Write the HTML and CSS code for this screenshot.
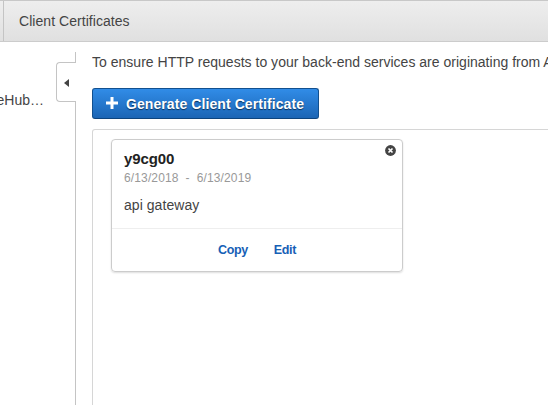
FILE: index.html
```html
<!DOCTYPE html>
<html lang="en">
<head>
<meta charset="utf-8">
<title>Client Certificates</title>
<link rel="stylesheet" href="styles.css">
</head>
<body>
<header class="topbar"><h1 class="crumb">Client Certificates</h1></header>
<div class="layout">
  <aside class="sidebar">
    <div class="api-name">eHub…</div>
    <div class="rail">
      <div class="rail-line rail-start"></div>
      <button class="collapse" aria-label="Collapse"><svg width="5" height="8" viewBox="0 0 5 8"><path d="M5 0v8L0 4z" fill="#444"/></svg></button>
      <div class="rail-line rail-rest"></div>
    </div>
  </aside>
  <main class="content">
    <p class="intro">To ensure HTTP requests to your back-end services are originating from A</p>
    <button class="generate"><svg width="12" height="12" viewBox="0 0 12 12"><path d="M6 0v12M0 6h12" stroke="#fff" stroke-width="3"/></svg><span class="generate-text">Generate Client Certificate</span></button>
    <section class="panel">
      <article class="card">
        <div class="card-body">
          <button class="close" aria-label="Delete"><svg width="11" height="11" viewBox="0 0 11 11"><circle cx="5.5" cy="5.5" r="5.4" fill="#444"/><path d="M3.5 3.5l4 4M7.5 3.5l-4 4" stroke="#fff" stroke-width="1.7"/></svg></button>
          <h2 class="cert-id">y9cg00</h2>
          <div class="dates"><span>6/13/2018</span><span>-</span><span>6/13/2019</span></div>
          <p class="description">api gateway</p>
        </div>
        <footer class="actions"><a class="copy">Copy</a><a class="edit">Edit</a></footer>
      </article>
    </section>
  </main>
</div>
</body>
</html>
```
FILE: styles.css
```css
* { box-sizing: border-box; }
body {
  margin: 0;
  height: 405px;
  overflow: hidden;
  background: #fff;
  color: #444;
  font: 14px/18px "Liberation Sans", Arial, sans-serif;
}
h1, h2, p { margin: 0; font: inherit; }
button { padding: 0; border: 0; background: none; font: inherit; }
svg { display: block; flex: none; }
.topbar {
  height: 42px;
  padding-left: 3px;
  border-top: 1px solid #c8c8c8;
  border-bottom: 1px solid #ccc;
  background: linear-gradient(#eee, #e0e0e0);
}
.crumb {
  height: 40px;
  padding: 11px 0 0 15px;
  border-left: 1px solid #c4c4c4;
  letter-spacing: 0.05px;
}
.layout { display: flex; height: 363px; }
.sidebar { display: flex; width: 76px; flex: none; }
.api-name {
  display: flex;
  justify-content: flex-end;
  width: 44px;
  margin-right: 12px;
  padding-top: 49px;
  overflow: hidden;
  white-space: nowrap;
}
.rail {
  display: flex;
  flex-direction: column;
  width: 20px;
  padding-top: 10px;
}
.rail-line { border-right: 1px solid #c4c4c4; }
.rail-start { height: 10px; }
.rail-rest { flex: 1; }
.collapse {
  display: flex;
  align-items: center;
  width: 20px;
  height: 40px;
  padding: 2px 0 0 7px;
  border: 1px solid #c4c4c4;
  border-right: 0;
  border-radius: 4px 0 0 4px;
}
.content {
  display: flex;
  flex: 1;
  flex-direction: column;
  align-items: flex-start;
  min-width: 0;
  padding: 11px 0 0 16px;
}
.intro {
  width: 456px;
  height: 18px;
  overflow: hidden;
  letter-spacing: 0.015px;
  white-space: nowrap;
}
.generate {
  display: flex;
  align-items: center;
  gap: 8px;
  width: 227px;
  height: 31px;
  margin-top: 17px;
  padding: 0 0 0 13px;
  border: 1px solid #12508f;
  border-bottom-color: #0d447e;
  border-radius: 3px;
  background: linear-gradient(#318ce7, #1b65b5);
  color: #fff;
  font-weight: bold;
  letter-spacing: 0.08px;
  text-shadow: 0 1px 1px #0b3157;
  white-space: nowrap;
}
.generate svg { margin-bottom: 2px; }
.panel {
  width: 470px;
  flex: 1;
  margin-top: 10px;
  padding: 9px 18px;
  border: 1px solid #d6d6d6;
  border-bottom: 0;
  border-radius: 3px 0 0;
}
.card {
  width: 292px;
  height: 133px;
  border: 1px solid #ccc;
  border-radius: 4px;
  box-shadow: 0 1px 2px #0002;
}
.card-body {
  position: relative;
  height: 89px;
  padding: 10px 12px 0;
  border-bottom: 1px solid #eee;
}
.close { position: absolute; top: 5px; right: 6px; }
.cert-id {
  color: #222;
  font-size: 15px;
  font-weight: bold;
  letter-spacing: -0.1px;
  line-height: 18px;
}
.dates {
  display: flex;
  gap: 7px;
  margin-top: 2px;
  color: #999;
  font-size: 12px;
  letter-spacing: 0.13px;
  line-height: 17px;
}
.description { margin-top: 9px; letter-spacing: 0.05px; }
.actions {
  display: flex;
  justify-content: center;
  gap: 26px;
  padding-top: 12px;
  color: #1660b6;
  font-size: 12.5px;
  font-weight: bold;
  letter-spacing: -0.35px;
}
```
